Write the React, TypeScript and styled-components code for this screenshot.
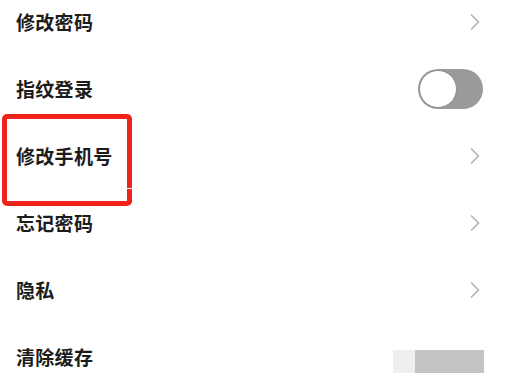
import styled, { createGlobalStyle } from "styled-components";

const GlobalStyle = createGlobalStyle`
  html, body {
    margin: 0;
    padding: 0;
    background: #ffffff;
    overflow: hidden;
  }
  body {
    font-family: "Noto Sans CJK SC", "Noto Sans", sans-serif;
  }
`;

const Page = styled.div`
  width: 505px;
  height: 390px;
  overflow: hidden;
  background: #fff;
`;

const List = styled.div`
  display: flex;
  flex-direction: column;
  margin-top: -12px;
`;

const Row = styled.div`
  position: relative;
  height: 67px;
  display: flex;
  align-items: center;
  justify-content: space-between;
  padding: 0 21px 0 16px;
  box-sizing: border-box;

  &::after {
    content: "";
    position: absolute;
    left: 16px;
    right: 5px;
    bottom: 0;
    height: 1px;
    background: #fbfbfb;
  }
`;

const Label = styled.span`
  font-size: 19px;
  font-weight: 700;
  color: #1c1c1c;
  letter-spacing: 0.3px;
`;

const Chevron = styled.svg`
  width: 12px;
  height: 18px;
  margin-right: 3px;
`;

const Toggle = styled.div`
  width: 65px;
  height: 40px;
  border-radius: 20px;
  background: #9a9a9c;
  display: flex;
  align-items: center;
  padding: 0 1px;
  box-sizing: border-box;
  margin-right: 1px;
`;

const Knob = styled.div`
  width: 38px;
  height: 38px;
  border-radius: 50%;
  background: #fff;
  box-sizing: border-box;
  border: 1.5px solid #8e8e90;
`;

const Blurred = styled.div`
  display: flex;
  margin-top: 9px;
`;

const BlurPart = styled.div<{ $w: number; $c: string }>`
  width: ${(p) => p.$w}px;
  height: 23px;
  background: ${(p) => p.$c};
`;

const Highlight = styled.div`
  position: absolute;
  left: 2px;
  top: -8px;
  width: 130px;
  height: 92px;
  border: 5px solid #f0221c;
  border-radius: 5px;
  box-sizing: border-box;
  pointer-events: none;
`;

function Arrow() {
  return (
    <Chevron viewBox="0 0 12 18">
      <path d="M2 1.5 L9.5 9 L2 16.5" fill="none" stroke="#b4b4b4" strokeWidth="1.6" />
    </Chevron>
  );
}

export default function App() {
  return (
    <Page>
      <GlobalStyle />
      <List>
        <Row>
          <Label>修改密码</Label>
          <Arrow />
        </Row>
        <Row>
          <Label>指纹登录</Label>
          <Toggle>
            <Knob />
          </Toggle>
        </Row>
        <Row>
          <Label>修改手机号</Label>
          <Arrow />
          <Highlight />
        </Row>
        <Row>
          <Label>忘记密码</Label>
          <Arrow />
        </Row>
        <Row>
          <Label>隐私</Label>
          <Arrow />
        </Row>
        <Row>
          <Label>清除缓存</Label>
          <Blurred>
            <BlurPart $w={22} $c="#efefef" />
            <BlurPart $w={69} $c="#c4c4c4" />
          </Blurred>
        </Row>
      </List>
    </Page>
  );
}
